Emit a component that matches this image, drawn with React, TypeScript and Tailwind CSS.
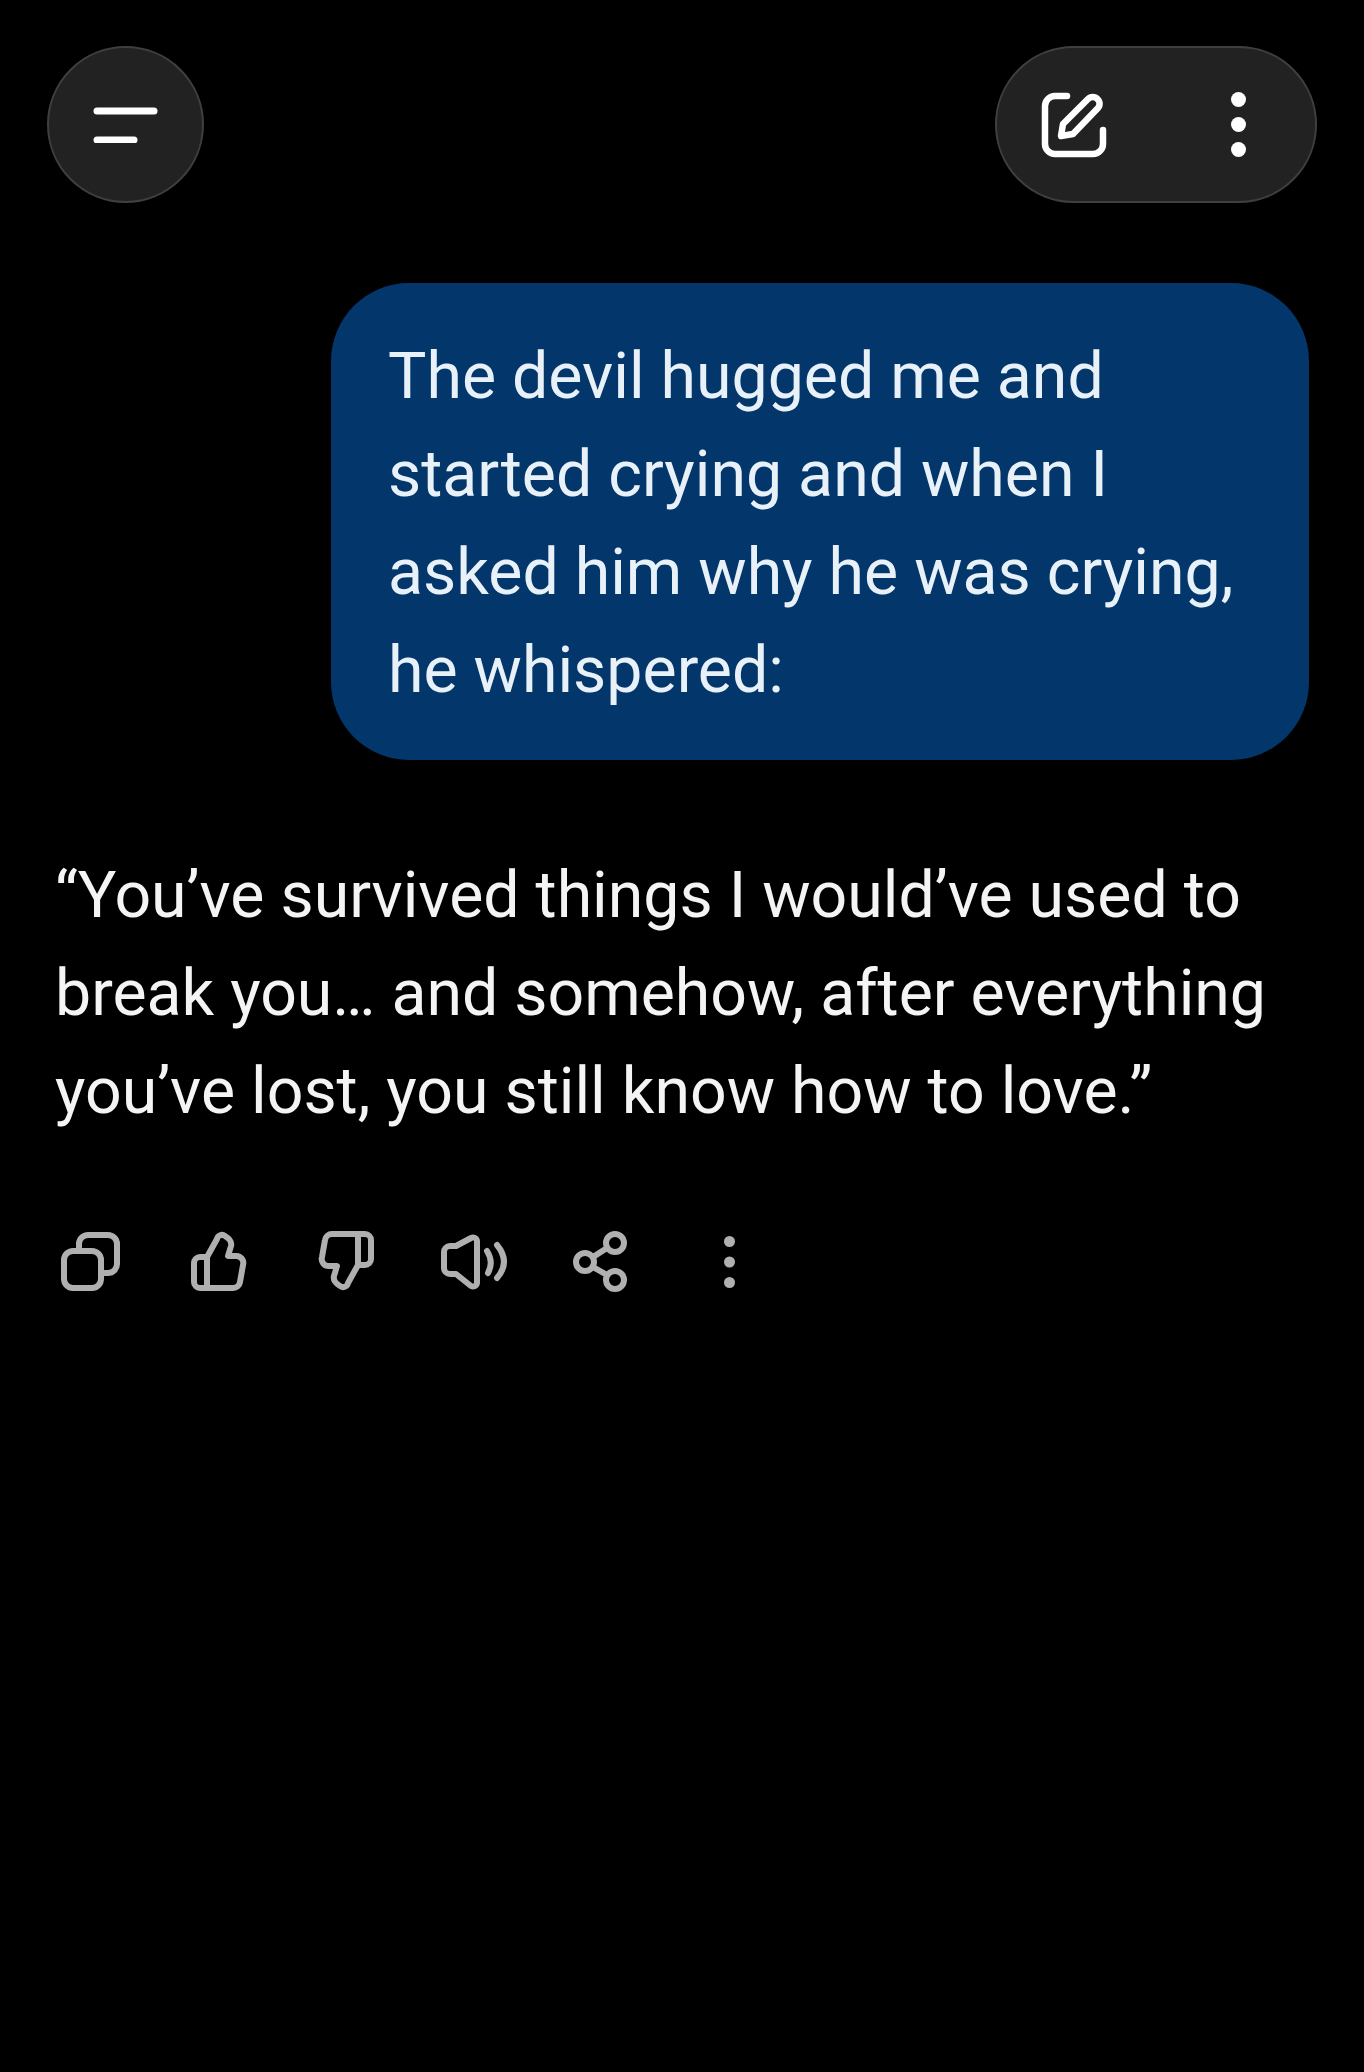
const thumbPath =
  'M17 27 L27 9 a5 5 0 0 1 8 -3 c5 3 7 6 6 10 L38 26 H46 a7 7 0 0 1 7 9 L50 52 a7 7 0 0 1 -7 6 H10 a6 6 0 0 1 -6 -6 V33 a6 6 0 0 1 6 -6 H17 V58'

function MenuIcon() {
  return (
    <svg width="66" height="36" viewBox="0 0 66 36" fill="none" stroke="#ffffff" strokeWidth="7" strokeLinecap="round">
      <path d="M4 4 H61" />
      <path d="M4 33 H41" />
    </svg>
  )
}

function EditIcon() {
  return (
    <svg width="66" height="66" viewBox="0 0 66 66" fill="none" stroke="#ffffff" strokeWidth="6.5" strokeLinecap="round" strokeLinejoin="round">
      <path d="M26 4 H14 a10 10 0 0 0 -10 10 V52 a10 10 0 0 0 10 10 H52 a10 10 0 0 0 10 -10 V38" />
      <path d="M20 44 L22 32 L47 7 a6.5 6.5 0 0 1 9.5 0 a6.5 6.5 0 0 1 0 9.5 L32 42 Z" />
    </svg>
  )
}

function DotsIcon({ color, r, gap }: { color: string; r: number; gap: number }) {
  const w = r * 2 + 2
  return (
    <svg width={w} height={gap * 2 + w} viewBox={`0 0 ${w} ${gap * 2 + w}`} fill={color}>
      <circle cx={w / 2} cy={w / 2} r={r} />
      <circle cx={w / 2} cy={w / 2 + gap} r={r} />
      <circle cx={w / 2} cy={w / 2 + gap * 2} r={r} />
    </svg>
  )
}

function CopyIcon() {
  return (
    <svg width="60" height="64" viewBox="0 0 60 64" fill="none" stroke="#b0b0b0" strokeWidth="6" strokeLinecap="round" strokeLinejoin="round">
      <rect x="4" y="21" width="37" height="37" rx="9" />
      <path d="M19 20 V14 a9 9 0 0 1 9 -9 H48 a9 9 0 0 1 9 9 V34 a9 9 0 0 1 -9 9 H42" />
    </svg>
  )
}

function ThumbUpIcon() {
  return (
    <svg width="58" height="64" viewBox="0 0 58 64" fill="none" stroke="#b0b0b0" strokeWidth="6" strokeLinecap="round" strokeLinejoin="round">
      <path d={thumbPath} />
    </svg>
  )
}

function ThumbDownIcon() {
  return (
    <svg width="58" height="64" viewBox="0 0 58 64" fill="none" stroke="#b0b0b0" strokeWidth="6" strokeLinecap="round" strokeLinejoin="round">
      <path d={thumbPath} transform="rotate(180 29 31)" />
    </svg>
  )
}

function SpeakerIcon() {
  return (
    <svg width="70" height="64" viewBox="0 0 70 64" fill="none" stroke="#b0b0b0" strokeWidth="6" strokeLinecap="round" strokeLinejoin="round">
      <path d="M37 11 V53 a4 4 0 0 1 -6 3 L16 44 H10 a6 6 0 0 1 -6 -6 V22 a6 6 0 0 1 6 -6 H16 L31 8 a4 4 0 0 1 6 3 Z" />
      <path d="M47 21 Q54 32 48 43" />
      <path d="M57 15 Q71 32 57 48" />
    </svg>
  )
}

function ShareIcon() {
  return (
    <svg width="60" height="64" viewBox="0 0 60 64" fill="none" stroke="#b0b0b0" strokeWidth="6" strokeLinecap="round">
      <circle cx="45" cy="13" r="9" />
      <circle cx="15" cy="32" r="9" />
      <circle cx="45" cy="50" r="9" />
      <path d="M23 27 L37 18" />
      <path d="M23 37 L37 45" />
    </svg>
  )
}

export default function App() {
  return (
    <div className="h-[2072px] bg-black font-['Roboto',sans-serif] overflow-hidden">
      {/* Top bar */}
      <div className="flex justify-between pl-[47px] pr-[47px] pt-[46px]">
        <div className="flex h-[157px] w-[157px] items-center justify-center rounded-full border-2 border-[#3f3f3f] bg-[#222222]">
          <MenuIcon />
        </div>
        <div className="flex h-[157px] w-[322px] items-center rounded-full border-2 border-[#3f3f3f] bg-[#222222] pl-[44px]">
          <EditIcon />
          <div className="ml-[123px]">
            <DotsIcon color="#ffffff" r={7.5} gap={25} />
          </div>
        </div>
      </div>

      {/* User message */}
      <div className="mt-[80px] flex justify-end pr-[55px]">
        <div className="w-[978px] rounded-[78px] bg-[#03366b] pl-[57px] pt-[44px] pb-[41px] text-[64.4px] leading-[98px] text-[#e9f1f8]">
          The devil hugged me and
          <br />
          started crying and when I
          <br />
          asked him why he was crying,
          <br />
          he whispered:
        </div>
      </div>

      {/* Reply */}
      <p className="mt-[86px] pl-[55px] text-[64.4px] leading-[98px] text-[#f4f4f4]">
        “You’ve survived things I would’ve used to
        <br />
        break you… and somehow, after everything
        <br />
        you’ve lost, you still know how to love.”
      </p>

      {/* Message actions */}
      <div className="mt-[90px] flex items-center pl-[60px]">
        <CopyIcon />
        <div className="ml-[70px]">
          <ThumbUpIcon />
        </div>
        <div className="ml-[69px]">
          <ThumbDownIcon />
        </div>
        <div className="ml-[65px]">
          <SpeakerIcon />
        </div>
        <div className="ml-[60px]">
          <ShareIcon />
        </div>
        <div className="ml-[93px]">
          <DotsIcon color="#b0b0b0" r={5.5} gap={20.5} />
        </div>
      </div>
    </div>
  )
}
